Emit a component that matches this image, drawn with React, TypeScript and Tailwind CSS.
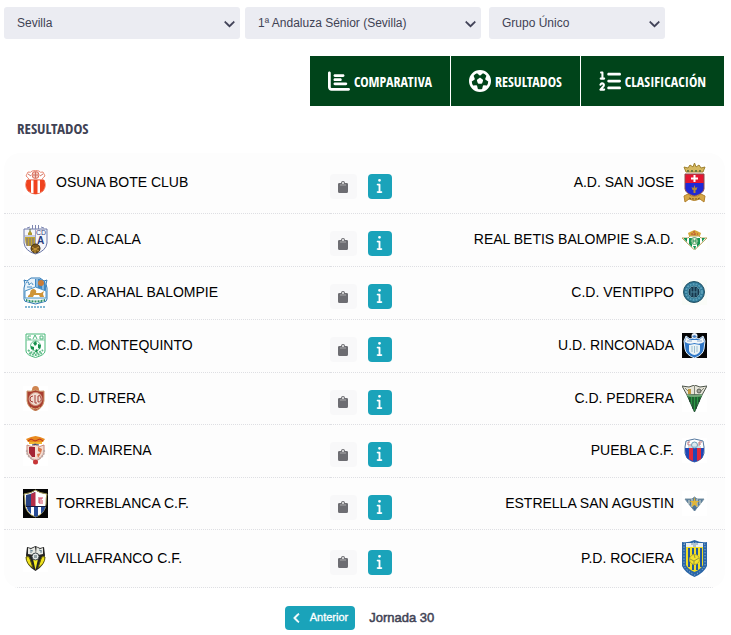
import type { ReactNode } from 'react';
import { FaChartBar, FaFutbol, FaListOl, FaInfo, FaChevronLeft, FaChevronDown } from 'react-icons/fa6';

function Crest({ h, bg = '#fff', children }: { h: number; bg?: string; children: ReactNode }) {
  return (
    <svg width="25" height={h} viewBox={`0 0 25 ${h}`} className="block shrink-0" aria-hidden="true">
      <rect width="25" height={h} fill={bg} />
      {children}
    </svg>
  );
}

const osuna = (
  <Crest h={25}>
    <path d="M5 2Q8 3 9 1Q12.500 0 16 1Q17 3 20 2L22 6Q19 8 19 10H6Q6 8 3 6Z" fill="#fff" stroke="#e98a76" strokeWidth="1" />
    <circle cx="12.500" cy="5" r="3.500" fill="#f6c9bd" stroke="#dd6f5c" />
    <path d="M10 5h5M12.500 2v6M5 4l3 2M20 4l-3 2" stroke="#cc7466" strokeWidth="1" />
    <path d="M4 10H21Q24 16 20 21Q17 24 12.500 24T5 21Q1 16 4 10Z" fill="#fff" stroke="#ee7a5e" />
    <path d="M4 10h4v12.500Q5 22 4 19Q2 15 4 10ZM10.500 10h4v14h-4ZM17 10h4Q23 15 21 19Q20 22 17 22.500Z" fill="#f0431f" />
  </Crest>
);

const alcala = (
  <Crest h={30}>
    <path d="M1 4H24V18Q23 26 12.500 29Q2 26 1 18Z" fill="#f6f6fa" stroke="#6a76a6" strokeWidth="1" />
    <path d="M9.500 0v4M12.500 0v5M15.500 0v4M4 3l3-1M21 3l-3-1" stroke="#7d86b0" strokeWidth="1" />
    <path d="M12.500 4V20M1 11h11" stroke="#9ca3c6" strokeWidth="1" />
    <path d="M2 12h10v9H4Q2 19 2 12Z" fill="#c2a52f" />
    <path d="M4 13v8M7 13v8M10 13v8" stroke="#6f6a98" strokeWidth="1" />
    <path d="M5 10V8l2-2 2 2v2Z" fill="#b29a2c" />
    <path d="M7 4v3" stroke="#63752f" strokeWidth="1" />
    <text x="13" y="10" fontSize="7" fontFamily="Liberation Sans, sans-serif" fill="#33457f">CD</text>
    <text x="14" y="19" fontSize="10" fontWeight="bold" fontFamily="Liberation Sans, sans-serif" fill="#273b7c">A</text>
    <circle cx="12.500" cy="23.500" r="4.500" fill="#7a5719" stroke="#413019" />
    <path d="M9 22l3 2 4-2M12 24v4M9 26l3-2 4 2" stroke="#c99b3d" strokeWidth="1" fill="none" />
  </Crest>
);

const arahal = (
  <Crest h={32}>
    <path d="M1 3L4 4L8 1H17L21 4L24 3L23 7L24 11V22Q24 25 20 25L12.500 27L5 25Q1 25 1 22V11L2 7Z" fill="#e9f3fb" stroke="#2f78b5" strokeWidth="1" />
    <path d="M12 2H17L22 4L23 9V14L12 10Z" fill="#3f88c3" />
    <path d="M14 2v8M20 4v9" stroke="#d4e8f6" strokeWidth="1" />
    <circle cx="18" cy="6" r="3" fill="#c97c38" />
    <path d="M3 6q3-3 3 2q3-4 4 0M4 10h5" stroke="#4d8fc0" fill="none" />
    <path d="M2 14L12.500 10L23 14V21H2Z" fill="#fff" stroke="#4d93c5" strokeWidth="1" />
    <path d="M5 19L7 17Q7 12 11 12Q14 13 13 16H18L21 14L20 17L21 20H17L16 18H11L10 20H5Z" fill="#cf9438" />
    <path d="M3 22q9 3 19 0v2q-9 3-19 0Z" fill="#2c9265" />
    <path d="M5 22v3M8 22v3M11 23v3M14 23v3M17 22v3M20 22v3" stroke="#fff" strokeWidth="1" />
    <path d="M2 30h21" stroke="#83b7d4" strokeWidth="2" strokeDasharray="2 1" />
  </Crest>
);

const montequinto = (
  <Crest h={25}>
    <path d="M3 1h19v17Q22 22 12.500 24.500Q3 22 3 18Z" fill="#fff" stroke="#46b777" strokeWidth="1" />
    <path d="M3 7h19" stroke="#82cba2" strokeWidth="1" />
    <path d="M8 3H5v3h3M17 3v3h3V3ZM10 6l2-4 2 4" stroke="#4fb77d" fill="none" strokeWidth="1" />
    <circle cx="12.500" cy="13" r="5" fill="#f7fff9" stroke="#67c28e" />
    <path d="M10 10l3-2 1 3-2 2ZM15 11l3 1-1 4-2-1ZM8 13l3 1v3l-3-1ZM13 16l2 1-1 2h-2Z" fill="#17904c" />
    <path d="M5 17q7 6 15 0M6 20q7 4 13 0" stroke="#60bd88" fill="none" strokeWidth="2" strokeDasharray="2 1" />
  </Crest>
);

const utrera = (
  <Crest h={25}>
    <path d="M9 4Q9 0 12.500 0T16 4L17 6H8Z" fill="#cf8550" />
    <path d="M4 5Q8 6 12.500 4Q17 6 21 5V15Q20 22 12.500 25Q5 22 4 15Z" fill="#a93e30" stroke="#ce9a6e" strokeWidth="1" />
    <circle cx="12.500" cy="13" r="6.500" fill="#f1dcd2" stroke="#d09a83" />
    <path d="M10 10Q7 10 7 13T10 16M12 9v8h2M15 10v6q4 0 3-4t-3-2" fill="none" stroke="#a53e36" strokeWidth="1" />
    <path d="M8 21q4 4 9 0" stroke="#d9aa77" fill="none" />
  </Crest>
);

const mairena = (
  <Crest h={30}>
    <path d="M5 6L3 3L8 1L12.500 0L17 1L22 3L20 6Z" fill="#e98a1f" />
    <path d="M5 5l3-2 4 2 5-2 3 2" stroke="#b9311f" fill="none" />
    <path d="M6 7h13" stroke="#f1b832" strokeWidth="2" />
    <path d="M4 9Q8 12 12.500 9Q17 12 21 9V16Q20 22 12.500 25Q5 22 4 16Z" fill="#f4ded3" stroke="#c98779" />
    <path d="M6 11h6v10H9L6 17Z" fill="#a42434" />
    <path d="M15 11l4 2-1 4-3-2ZM14 18l4-1-3 5Z" fill="#d97347" />
    <path d="M4 14q-1 6 7 10M21 14q1 6-7 10" stroke="#bcaaa7" fill="none" strokeWidth="2" strokeDasharray="2 1" />
    <circle cx="12.500" cy="26" r="2.500" fill="#c73638" />
    <path d="M9 9l3-1 4 1" stroke="#596891" />
  </Crest>
);

const torreblanca = (
  <Crest h={29} bg="#050505">
    <path d="M12.500 1Q16 4 24 5Q23 8 23 15Q22 25 12.500 28Q3 25 2 15Q2 8 1 5Q9 4 12.500 1Z" fill="#fff" stroke="#9c9451" strokeWidth="1" />
    <path d="M12 3V17H3V12Q3 8 3 6Q9 5 12 3Z" fill="#284483" />
    <path d="M8 5L12.500 3V17H8Z" fill="#b42d48" />
    <path d="M3 17h20v1H3Z" fill="#131a42" />
    <path d="M4 18h4v7Q4 22 4 18ZM11 18h4v9l-2 1-2-1ZM18 18h4Q22 22 18 25Z" fill="#284c96" />
    <path d="M19 10h-3v4h4M15 9h5M16 12h4" stroke="#d2435c" fill="none" />
  </Crest>
);

const villafranco = (
  <Crest h={27}>
    <path d="M4 2L8 3L12.500 1L17 3L21 2L22 10Q22 21 12.500 26Q3 21 3 10Z" fill="#242424" />
    <path d="M5 3L8 4L12 2L13 9L11 10L5 9ZM20 3L17 4L13.500 2L13 9L15 10L20 9Z" fill="#e7e9e4" />
    <path d="M7 5l3 1M16 5l3 1M7 7h2M17 7h2" stroke="#678190" />
    <path d="M3 12Q6 10 7 14L10 23Q3 19 3 12ZM22 12Q19 10 18 14L15 23Q22 19 22 12Z" fill="#f0e21d" stroke="#5c580f" strokeWidth="1" />
    <path d="M10 14h5l-2.500 11Z" fill="#f5ec24" />
    <circle cx="12.500" cy="11.500" r="3.500" fill="#e4e7e8" stroke="#40494c" />
    <path d="M11 10h3v3h-3Z" fill="#93a1a4" />
  </Crest>
);

const sanJose = (
  <Crest h={40}>
    <path d="M4 9L2 4L6 5L8 2L11 4L12.500 0L14 4L17 2L19 5L23 4L21 9Z" fill="#d5b860" stroke="#9e812f" strokeWidth="1" />
    <path d="M5 8h15" stroke="#6d7b3f" strokeWidth="2" strokeDasharray="2 2" />
    <path d="M3 11h19v9H3Z" fill="#e51632" />
    <path d="M3 20h19v6Q21 31 12.500 33Q4 31 3 26Z" fill="#2028d6" />
    <path d="M3 11h19v15Q21 31 12.500 33Q4 31 3 26Z" fill="none" stroke="#8d4a4c" strokeWidth="1" />
    <path d="M12.500 12v7M9 15.500h7" stroke="#fff" strokeWidth="2" />
    <path d="M12.500 22l1 3 2-1-1 3h-1v3h-2v-3h-1l-1-3 2 1Z" fill="#b08a38" />
    <path d="M2 33L6 31Q12 36 19 31L23 33L22 39L18 36Q12 39 7 36L3 39Z" fill="#d7a746" stroke="#b1802e" strokeWidth="1" />
    <path d="M7 35q6 2 11 0" stroke="#7a5a25" fill="none" strokeWidth="1" strokeDasharray="2 1" />
  </Crest>
);

const betis = (
  <Crest h={20}>
    <path d="M7 6L6 3L10 1L12.500 0L15 1L19 3L18 6Z" fill="#d7a73a" />
    <path d="M9 4h7M12 1v4" stroke="#b84235" strokeWidth="1" strokeDasharray="2 1" />
    <path d="M0 8H6L8 6H17L19 8H25L12.500 20Z" fill="#fff" stroke="#b9a35b" strokeWidth="1" />
    <path d="M2 8h3v4l-3-3ZM7 8h3v9l-3-3ZM15 8h3v6l-3 3ZM20 8h3l-3 4ZM11 16h3l-1 4Z" fill="#139450" />
    <circle cx="12.500" cy="11" r="3.500" fill="#e9f2da" stroke="#4d9e65" />
    <path d="M11 9v4M14 9v4M11 11h3" stroke="#278f50" />
  </Crest>
);

const ventippo = (
  <Crest h={25} bg="#fafcf8">
    <circle cx="12" cy="12" r="10.500" fill="#2b7594" stroke="#275466" strokeWidth="1" />
    <circle cx="12" cy="12" r="8" fill="none" stroke="#5b9fb8" strokeWidth="2" strokeDasharray="2 1" />
    <circle cx="12" cy="12" r="6" fill="#17364c" stroke="#6aa5b5" strokeWidth="1" />
    <path d="M9 8v8M12 7v10M15 8v8M9 12h6" stroke="#4a859b" strokeWidth="1" />
  </Crest>
);

const rinconada = (
  <Crest h={25} bg="#050505">
    <path d="M2 8L4 3L8 6L12.500 4L17 6L21 3L23 8L22 16Q21 22 12.500 25Q4 22 3 16Z" fill="#3078c8" stroke="#dcecf9" strokeWidth="1" />
    <path d="M4 4L8 7H17L21 4L22 9Q18 12 12.500 10Q7 12 3 9Z" fill="#f3f7fa" />
    <circle cx="12.500" cy="3" r="3" fill="#e7eff7" />
    <path d="M10 3l3-1 2 2-3 1Z" fill="#427bbe" />
    <path d="M7 12L12.500 11L18 12V18Q17 21 12.500 22Q8 21 7 18Z" fill="#e9f2f5" />
    <path d="M10 13v6M12.500 13v7M15 13v6" stroke="#9bbdd0" strokeWidth="1" />
    <path d="M5 8h5M15 8h5" stroke="#8aaacd" strokeWidth="1" />
  </Crest>
);

const pedrera = (
  <Crest h={27}>
    <path d="M0 1L7 2L12.500 0L18 2L25 1L20 10H5Z" fill="#e6e5d9" stroke="#4c5349" strokeWidth="1" />
    <path d="M12.500 1v9M3 3l5 5M22 3l-5 5" stroke="#818579" strokeWidth="1" />
    <path d="M6 4h3v5H6Z" fill="#bd9940" />
    <circle cx="17" cy="6" r="2" fill="#a3a49b" stroke="#5a6057" strokeWidth="1" />
    <path d="M5 10h15L12.500 27Z" fill="#2b9845" stroke="#265236" strokeWidth="1" />
    <path d="M8 12v5M11 12v12M14 12v12M17 12v5" stroke="#142e20" strokeWidth="1" />
    <path d="M5 10q7 2 15 0" stroke="#77a57a" strokeWidth="2" fill="none" />
  </Crest>
);

const puebla = (
  <Crest h={25}>
    <path d="M4 3L8 2L12.500 1L17 2L21 3L22 9Q23 16 20 20Q17 23 12.500 24Q8 23 5 20Q2 16 3 9Z" fill="#fff" stroke="#53779e" strokeWidth="1" />
    <path d="M3 10h19Q22 17 20 20Q17 23 12.500 24Q8 23 5 20Q3 17 3 10Z" fill="#2048b6" />
    <path d="M7 10h4v13l-4-2ZM15 10h4v11l-4 2Z" fill="#e02a3d" />
    <path d="M8 4H6v3h3M17 4v4M17 4h3M17 6h2" stroke="#b87378" strokeWidth="1" fill="none" />
    <circle cx="12.500" cy="7" r="3" fill="#dbe8ed" stroke="#6b9cb6" strokeWidth="1" />
    <path d="M6 9h13" stroke="#8ebdcf" strokeWidth="1" />
  </Crest>
);

const estrella = (
  <Crest h={25}>
    <path d="M3 8H10L12.500 6L15 8H22L19 12L12.500 20L6 12Z" fill="#52799b" stroke="#7790a0" strokeWidth="1" />
    <path d="M7 9v4M10 8v8M15 8v8M18 9v4" stroke="#e2e5d7" strokeWidth="1" />
    <path d="M12.500 6l1 4h4l-3 2 1 4-3-2-3 2 1-4-3-2h4Z" fill="#e2b638" />
    <path d="M11 17h3l-1 3Z" fill="#456d98" />
  </Crest>
);

const rociera = (
  <Crest h={37}>
    <path d="M0 2Q6 3 12.500 0Q19 3 25 2V26Q22 33 12.500 37Q3 33 0 26Z" fill="#2b66a7" />
    <path d="M2 4Q7 5 12.500 2Q18 5 23 4V26Q20 31 12.500 35Q5 31 2 26Z" fill="none" stroke="#b4ccdf" strokeWidth="1" strokeDasharray="1 2" />
    <path d="M4 7h17v18Q19 29 12.500 32Q6 29 4 25Z" fill="#f2df23" />
    <path d="M7 8v19M11 8v22M15 8v22M19 8v19" stroke="#25599c" strokeWidth="2" />
    <path d="M4 3h17v4H4Z" fill="#e9eff2" />
    <path d="M9 4h7M11 6h3" stroke="#7394ad" strokeWidth="1" />
    <circle cx="12.500" cy="19.500" r="5" fill="#f2e230" stroke="#b9ac2e" strokeWidth="1" />
    <path d="M8 19l4 2 5-3M12 21v4M12 14l1 4" stroke="#9a9838" strokeWidth="1" fill="none" />
  </Crest>
);

type Match = { home: string; away: string; homeCrest: ReactNode; awayCrest: ReactNode; height: string };

const matches: Match[] = [
  { home: 'OSUNA BOTE CLUB', away: 'A.D. SAN JOSE', homeCrest: osuna, awayCrest: sanJose, height: 'h-[60px]' },
  { home: 'C.D. ALCALA', away: 'REAL BETIS BALOMPIE S.A.D.', homeCrest: alcala, awayCrest: betis, height: 'h-[53px]' },
  { home: 'C.D. ARAHAL BALOMPIE', away: 'C.D. VENTIPPO', homeCrest: arahal, awayCrest: ventippo, height: 'h-[53px]' },
  { home: 'C.D. MONTEQUINTO', away: 'U.D. RINCONADA', homeCrest: montequinto, awayCrest: rinconada, height: 'h-[53px]' },
  { home: 'C.D. UTRERA', away: 'C.D. PEDRERA', homeCrest: utrera, awayCrest: pedrera, height: 'h-[52px]' },
  { home: 'C.D. MAIRENA', away: 'PUEBLA C.F.', homeCrest: mairena, awayCrest: puebla, height: 'h-[53px]' },
  { home: 'TORREBLANCA C.F.', away: 'ESTRELLA SAN AGUSTIN', homeCrest: torreblanca, awayCrest: estrella, height: 'h-[52px]' },
  { home: 'VILLAFRANCO C.F.', away: 'P.D. ROCIERA', homeCrest: villafranco, awayCrest: rociera, height: 'h-[58px]' },
];

function Filter({ label, value, className }: { label: string; value: string; className: string }) {
  return (
    <div className={`relative ${className}`}>
      <select
        aria-label={label}
        className="h-8 w-full appearance-none rounded-[3px] bg-[#ebecf2] pr-8 pl-[13px] text-[12px] text-[#3f4254]"
      >
        <option>{value}</option>
      </select>
      <FaChevronDown className="pointer-events-none absolute top-[11px] right-[5px] size-[11px] stroke-current text-[#3b3c52] [stroke-width:32]" />
    </div>
  );
}

function Tab({ icon, children }: { icon: ReactNode; children: ReactNode }) {
  return (
    <button
      type="button"
      className="flex h-[50px] items-center gap-1 bg-[#00441a] px-[18px] font-['Open_Sans_Condensed','Roboto_Condensed',sans-serif] text-[14px] font-bold text-white"
    >
      <span className="text-[22px]">{icon}</span>
      {children}
    </button>
  );
}

function Clipboard() {
  return (
    <svg width="10" height="12" viewBox="0 0 10 12" aria-hidden="true">
      <path d="M1.500 2H3Q3 0 5 0T7 2H8.500Q10 2 10 3V10.500Q10 12 8.500 12H1.500Q0 12 0 10.500V3Q0 2 1.500 2Z" fill="#6d6d72" />
      <circle cx="5" cy="2" r="1" fill="#eee" />
      <path d="M2 4h6" stroke="#aaa" strokeWidth="1" />
    </svg>
  );
}

export default function App() {
  return (
    <main className="bg-white px-1 pt-[7px] font-['Liberation_Sans',Arial,sans-serif]">
      <div className="flex">
        <Filter label="Provincia" value="Sevilla" className="mr-[5px] flex-[236]" />
        <Filter label="Competición" value="1ª Andaluza Sénior (Sevilla)" className="mr-2 flex-[236]" />
        <Filter label="Grupo" value="Grupo Único" className="mr-[62px] flex-[176]" />
      </div>

      <nav className="mt-[17px] mr-[3px] flex justify-end gap-px">
        <Tab icon={<FaChartBar />}>COMPARATIVA</Tab>
        <Tab icon={<FaFutbol />}>RESULTADOS</Tab>
        <Tab icon={<FaListOl />}>CLASIFICACIÓN</Tab>
      </nav>

      <h1 className="mt-[10px] ml-[13px] font-['Open_Sans_Condensed','Roboto_Condensed',sans-serif] text-[15px] leading-6 font-bold text-[#3f4254]">
        RESULTADOS
      </h1>

      <div className="mt-[13px] mr-[2px] overflow-hidden rounded-[16px] bg-[#fdfdfd]">
        <table className="w-full table-fixed border-collapse text-[14px] text-black">
          <colgroup>
            <col />
            <col className="w-[70px]" />
            <col />
          </colgroup>
          <tbody>
            {matches.map((m) => (
              <tr key={m.home} className={`border-b border-dotted border-[#dedfe3] ${m.height}`}>
                <td className="p-0">
                  <div className="flex items-center gap-2 pl-[19px]">
                    {m.homeCrest}
                    {m.home}
                  </div>
                </td>
                <td className="p-0">
                  <div className="flex items-center justify-between pt-2 pr-2">
                    <button type="button" aria-label="Acta" className="flex h-[25px] w-[27px] items-center justify-center rounded-[4px] bg-[#f8f8f9]">
                      <Clipboard />
                    </button>
                    <button type="button" aria-label="Información" className="flex h-[25px] w-6 items-center justify-center rounded-[4px] bg-[#1aa3ba] pb-[2px] text-[15px] text-white">
                      <FaInfo />
                    </button>
                  </div>
                </td>
                <td className="p-0">
                  <div className="flex items-center justify-end gap-2 pr-[18px]">
                    {m.away}
                    {m.awayCrest}
                  </div>
                </td>
              </tr>
            ))}
          </tbody>
        </table>
      </div>

      <div className="mt-[18px] flex items-center justify-center gap-[14px] pr-3 pb-1 text-[#3f4254]">
        <button type="button" className="flex h-6 items-center gap-2 rounded-[4px] bg-[#1aa3ba] px-[7px] text-[11px] text-white [-webkit-text-stroke:0.3px_white]">
          <FaChevronLeft className="size-[10px] stroke-current [stroke-width:48]" />
          Anterior
        </button>
        <span className="text-[13px] [-webkit-text-stroke:0.5px_#3f4254]">Jornada 30</span>
      </div>
    </main>
  );
}
